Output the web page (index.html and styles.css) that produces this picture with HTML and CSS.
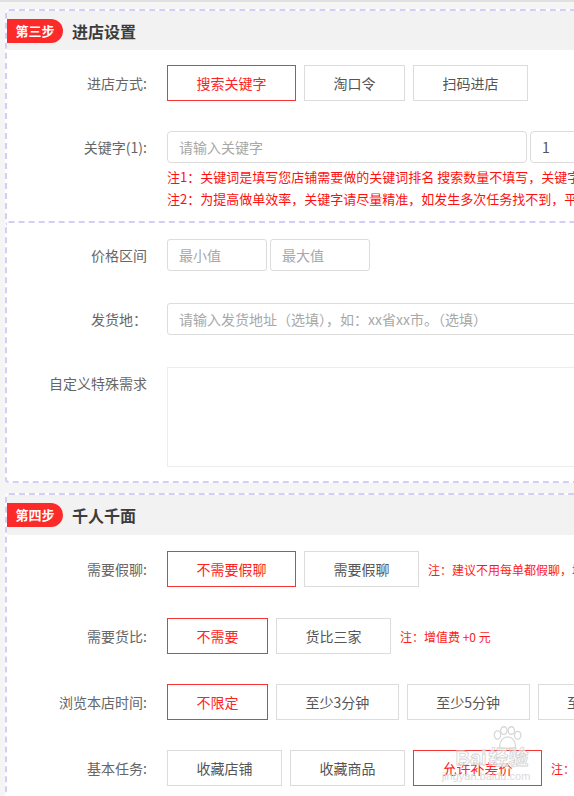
FILE: index.html
```html
<!DOCTYPE html>
<html lang="zh-CN">
<head>
<meta charset="utf-8">
<title>进店设置</title>
<link rel="stylesheet" href="styles.css">
</head>
<body>
<div class="topline"></div>
<div class="page">
  <section class="box box-a">
    <div class="box-head"><span class="step">第三步</span><span class="box-title">进店设置</span></div>
    <div class="row row-first">
      <div class="label">进店方式:</div>
      <div class="opts">
        <span class="opt on">搜索关键字</span>
        <span class="opt">淘口令</span>
        <span class="opt">扫码进店</span>
      </div>
    </div>
    <div class="row row-gap">
      <div class="label label-inp">关键字(1):</div>
      <div class="ctrl">
        <div class="kw">
          <input class="inp inp-kw" type="text" placeholder="请输入关键字">
          <input class="inp inp-num" type="text" value="1">
        </div>
        <p class="note">注1：关键词是填写您店铺需要做的关键词排名 搜索数量不填写，关键字数量默认为1</p>
        <p class="note">注2：为提高做单效率，关键字请尽量精准，如发生多次任务找不到，平台将暂停任务</p>
      </div>
    </div>
  </section>

  <section class="box box-b">
    <div class="row">
      <div class="label label-inp">价格区间</div>
      <div class="price">
        <input class="inp inp-price" type="text" placeholder="最小值">
        <input class="inp inp-price" type="text" placeholder="最大值">
      </div>
    </div>
    <div class="row row-gap2">
      <div class="label label-inp">发货地：</div>
      <input class="inp inp-ship" type="text" placeholder="请输入发货地址（选填），如：xx省xx市。（选填）">
    </div>
    <div class="row row-gap2">
      <div class="label label-inp">自定义特殊需求</div>
      <textarea class="area"></textarea>
    </div>
  </section>

  <section class="box box-c">
    <div class="box-head head-c"><span class="step">第四步</span><span class="box-title">千人千面</span></div>
    <div class="row row-first-c">
      <div class="label">需要假聊:</div>
      <div class="opts">
        <span class="opt on">不需要假聊</span>
        <span class="opt">需要假聊</span>
        <span class="tip">注：建议不用每单都假聊，增值费 +0.5 元</span>
      </div>
    </div>
    <div class="row row-c2">
      <div class="label">需要货比:</div>
      <div class="opts">
        <span class="opt on">不需要</span>
        <span class="opt">货比三家</span>
        <span class="tip">注：增值费 +0 元</span>
      </div>
    </div>
    <div class="row row-c">
      <div class="label">浏览本店时间:</div>
      <div class="opts">
        <span class="opt on">不限定</span>
        <span class="opt">至少3分钟</span>
        <span class="opt">至少5分钟</span>
        <span class="opt">至少10分钟</span>
      </div>
    </div>
    <div class="row row-c">
      <div class="label">基本任务:</div>
      <div class="opts">
        <span class="opt">收藏店铺</span>
        <span class="opt">收藏商品</span>
        <span class="opt on">允许补差价</span>
        <span class="tip">注：允许补差价</span>
      </div>
    </div>
  </section>
</div>

<div class="watermark">
  <svg class="paw" width="34" height="24" viewBox="0 0 32 22">
    <g fill="#fff" stroke="#d6d6d6" stroke-width="1.2">
      <ellipse cx="8" cy="8" rx="3" ry="4"/>
      <ellipse cx="14" cy="4" rx="3" ry="3.6"/>
      <ellipse cx="21" cy="4" rx="3" ry="3.6"/>
      <ellipse cx="27" cy="8.5" rx="3" ry="3.8"/>
      <path d="M10 19 C10 13 14 10 17.5 10 C21 10 25 13 25 19 C25 21 22 21.5 17.5 20.5 C13 21.5 10 21 10 19 Z"/>
    </g>
  </svg>
  <div class="wm-main"><span class="wm-bai">Bai</span><span class="wm-jy">经验</span></div>
  <div class="wm-url">jingyan.baidu.com</div>
</div>
</body>
</html>
```

FILE: styles.css
```css
html, body {
  margin: 0;
  padding: 0;
}

body {
  width: 574px;
  height: 796px;
  overflow: hidden;
  position: relative;
  background: #f5f5f5;
  font-family: "Noto Sans CJK SC", "Microsoft YaHei", "Noto Sans", sans-serif;
  color: #555;
}

.topline {
  height: 2px;
  background: #e0e0e0;
}

.page {
  width: 1000px;
  margin: 7px 0 0 5px;
}

.box {
  background: #fff;
  border: 2px dashed #d2cff7;
  border-radius: 4px;
}

.box-a {
  padding-bottom: 11px;
}

.box-b {
  border-top: none;
  border-radius: 0 0 4px 4px;
  padding: 16px 0 14px;
}

.box-c {
  margin-top: 10px;
  padding-bottom: 20px;
}

.box-head {
  height: 39px;
  background: #f2f2f2;
  display: flex;
  align-items: center;
}

.head-c {
  height: 40px;
}

.step {
  width: 56px;
  height: 24px;
  background: #fd2a2a;
  border-radius: 0 12px 12px 0;
  color: #fff;
  font-size: 13px;
  font-weight: bold;
  line-height: 24px;
  text-align: center;
}

.box-title {
  margin-left: 9px;
  font-size: 16px;
  font-weight: bold;
  color: #3c3c3c;
  line-height: 24px;
}

.row {
  display: flex;
  align-items: flex-start;
}

.row-first {
  margin-top: 15px;
}

.row-gap {
  margin-top: 30px;
}

.row-gap2 {
  margin-top: 32px;
}

.row-first-c {
  margin-top: 16px;
}

.row-c2 {
  margin-top: 31px;
}

.row-c {
  margin-top: 30px;
}

.label {
  width: 140px;
  flex: none;
  margin-right: 20px;
  text-align: right;
  font-size: 14px;
  line-height: 36px;
  color: #666;
  white-space: nowrap;
}

.label-inp {
  line-height: 32px;
}

.opts {
  display: flex;
  align-items: center;
  gap: 8px;
}

.opt {
  height: 36px;
  box-sizing: border-box;
  padding: 0 28.5px;
  border: 1px solid #dcdcdc;
  background: #fff;
  color: #555;
  font-size: 14px;
  line-height: 34px;
  white-space: nowrap;
}

.opt.on {
  border-color: #f53434;
  color: #ff2424;
}

.tip {
  margin-left: 1px;
  font-size: 12px;
  color: #ff1a1a;
  white-space: nowrap;
}

.ctrl {
  display: flex;
  flex-direction: column;
}

.kw {
  display: flex;
  gap: 3px;
}

.inp {
  height: 32px;
  box-sizing: border-box;
  border: 1px solid #dcdcdc;
  border-radius: 4px;
  padding: 0 11px;
  font-family: inherit;
  font-size: 14px;
  color: #555;
  background: #fff;
  outline: none;
  margin: 0;
}

.inp::placeholder {
  color: #a8a8a8;
}

.inp-kw {
  width: 360px;
}

.inp-num {
  width: 120px;
}

.note {
  margin: 0;
  font-size: 13px;
  line-height: 22px;
  color: #ff1010;
  white-space: nowrap;
}

.note:first-of-type {
  margin-top: 3px;
}

.price {
  display: flex;
  gap: 3px;
}

.inp-price {
  width: 100px;
  border-radius: 3px;
}

.inp-ship {
  width: 720px;
  border-radius: 3px;
}

.area {
  width: 720px;
  height: 100px;
  box-sizing: border-box;
  border: 1px solid #ececec;
  margin: 0;
  padding: 6px 10px;
  resize: none;
  font-family: inherit;
  outline: none;
}

.watermark {
  position: absolute;
  left: 436px;
  top: 726px;
  width: 112px;
  pointer-events: none;
  display: flex;
  flex-direction: column;
  align-items: center;
}

.paw {
  margin-left: 28px;
}

.wm-main {
  display: flex;
  align-items: baseline;
  line-height: 18px;
  margin-top: -2px;
}

.wm-bai {
  font-family: "Liberation Sans", sans-serif;
  font-size: 20px;
  font-weight: bold;
  color: rgba(255, 255, 255, 0.6);
  -webkit-text-stroke: 0.8px #d4d4d4;
}

.wm-jy {
  margin-left: 2px;
  font-size: 20px;
  font-weight: bold;
  color: rgba(255, 255, 255, 0.6);
  -webkit-text-stroke: 0.8px #d4d4d4;
}

.wm-url {
  font-family: "Liberation Sans", sans-serif;
  font-size: 11px;
  line-height: 14px;
  color: #dadada;
  margin-top: 2px;
  margin-right: 12px;
}
```
